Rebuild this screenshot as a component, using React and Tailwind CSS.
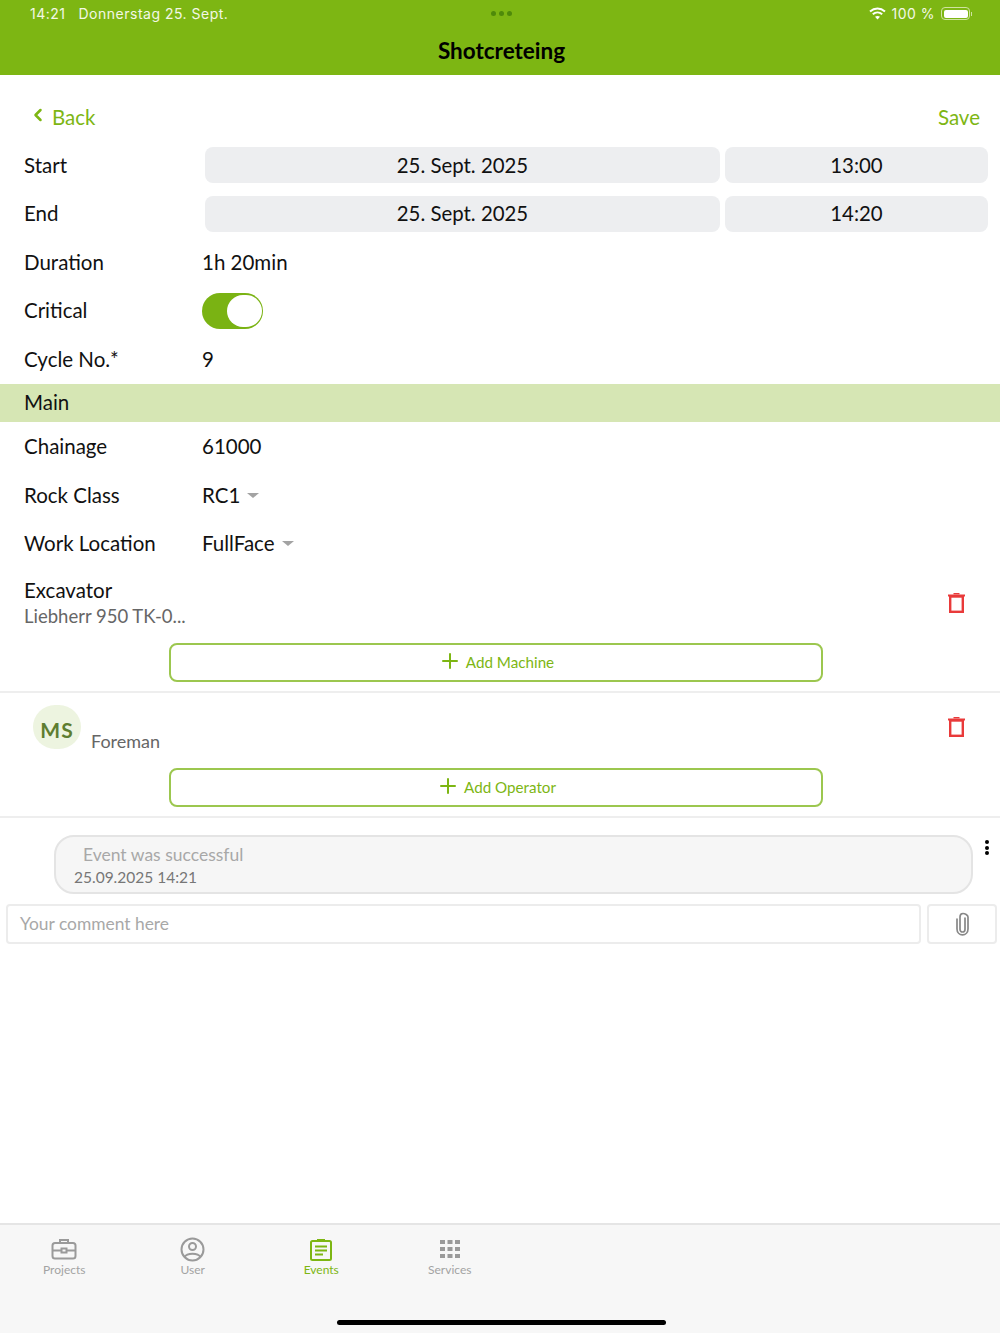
import { ChevronLeft, Plus } from 'lucide-react'

function Row({ label, children }) {
    return (
        <div className="flex items-center h-[48.5px] pl-6">
            <div className="w-[178px] text-[20.5px] text-[#111]">{label}</div>
            {children}
        </div>
    )
}

function DateRow({ label, date, time }) {
    return (
        <div className="flex items-center h-[48.5px] pl-6 pr-[12px]">
            <div className="w-[181px] text-[20.5px] text-[#111]">{label}</div>
            <div className="w-[515px] h-[36px] mr-[5px] rounded-lg bg-[#edeef0] flex items-center justify-center text-[20.4px] text-[#111]">{date}</div>
            <div className="flex-1 h-[36px] rounded-lg bg-[#edeef0] flex items-center justify-center text-[20.4px] text-[#111]">{time}</div>
        </div>
    )
}

function Caret() {
    return <span className="ml-[7px] w-0 h-0 border-x-[6px] border-x-transparent border-t-[5px] border-t-[#a3a3a3]"></span>
}

function Trash() {
    return (
        <svg width="17" height="20" viewBox="0 0 17 20" fill="none" stroke="#e93a3a">
            <path d="M0 2.5H17" strokeWidth="2" />
            <path d="M5.5 0.7H11.5" strokeWidth="1.4" />
            <rect x="2.2" y="3.5" width="12.6" height="15.3" strokeWidth="2.4" />
        </svg>
    )
}

function AddButton({ label, mt }) {
    return (
        <div className={`ml-[169px] w-[654px] h-[39px] rounded-lg border-2 border-[#9cc74f] flex items-center justify-center gap-[4px] text-[#7db613] text-[15.2px] ${mt}`}>
            <Plus size={24} strokeWidth={2} className="-mt-[3px]" />
            <span>{label}</span>
        </div>
    )
}

function NavItem({ icon, label, active }) {
    return (
        <div className={`w-[128.5px] flex flex-col items-center text-[12px] leading-[16px] ${active ? 'text-[#7db613]' : 'text-[#a3a3a3]'}`}>
            <div className="h-[24px] flex items-center justify-center mb-[1px]">{icon}</div>
            {label}
        </div>
    )
}

export default function App() {
    return (
        <div className="w-[1000px] h-[1333px] bg-white flex flex-col font-['Lato',sans-serif] overflow-hidden">
            <header className="relative h-[75px] bg-[#7db613] shrink-0">
                <div className="flex items-center h-[27px] pl-[30px] pr-[28px] text-[14px] text-[#f3f8e6] font-['Inter',sans-serif] tracking-[0.5px]">
                    <span>14:21</span>
                    <span className="ml-[13px]">Donnerstag 25. Sept.</span>
                    <div className="flex-1 flex justify-center gap-[3px] pr-[94px]">
                        <span className="w-[5px] h-[5px] rounded-full bg-[#4f8a0a]"></span>
                        <span className="w-[5px] h-[5px] rounded-full bg-[#4f8a0a]"></span>
                        <span className="w-[5px] h-[5px] rounded-full bg-[#4f8a0a]"></span>
                    </div>
                    <svg width="17" height="13" viewBox="0 0 17 13" fill="none" stroke="#fff" strokeWidth="2" className="mr-[5px]">
                        <path d="M1 4.5C5.5 0.5 11.5 0.5 16 4.5" />
                        <path d="M3.8 7.3C6.5 5 10.5 5 13.2 7.3" />
                        <path d="M8.5 12.5L6 9.8C7.5 8.7 9.5 8.7 11 9.8Z" fill="#fff" stroke="none" />
                    </svg>
                    <span>100 %</span>
                    <div className="ml-[6px] w-[29px] h-[13px] rounded-[4px] border border-[#cfe3a0] p-[1.5px]">
                        <div className="w-full h-full rounded-[2px] bg-white"></div>
                    </div>
                    <span className="ml-[1px] w-[1px] h-[4px] bg-[#cfe3a0]"></span>
                </div>
                <div className="text-center text-[22.5px] font-bold text-black leading-[48px] pl-[3px]">Shotcreteing</div>
            </header>

            <div className="flex justify-between items-center h-[30px] mt-[27px] pl-[28px] pr-[20px] text-[#7db613] text-[20.5px]">
                <div className="flex items-center">
                    <ChevronLeft size={20} strokeWidth={3} className="mr-[4px] -mt-[4px]" />
                    <span>Back</span>
                </div>
                <span>Save</span>
            </div>

            <div className="mt-[9px]">
                <DateRow label="Start" date="25. Sept. 2025" time="13:00" />
                <DateRow label="End" date="25. Sept. 2025" time="14:20" />
                <Row label="Duration"><span className="text-[20.5px] text-[#111]">1h 20min</span></Row>
                <Row label="Critical">
                    <div className="w-[61px] h-[36px] rounded-full bg-[#7ab313] relative">
                        <span className="absolute right-[1px] top-[2px] w-[35px] h-[32px] rounded-full bg-white"></span>
                    </div>
                </Row>
                <Row label="Cycle No.*"><span className="text-[20.5px] text-[#111]">9</span></Row>
            </div>

            <div className="h-[38px] bg-[#d6e6b4] flex items-center pl-6 text-[20.5px] text-[#111]">Main</div>

            <div className="mt-[1px]">
                <Row label="Chainage"><span className="text-[20.5px] text-[#111]">61000</span></Row>
                <Row label="Rock Class"><span className="text-[20.5px] text-[#111]">RC1</span><Caret /></Row>
                <Row label="Work Location"><span className="text-[20.5px] text-[#111]">FullFace</span><Caret /></Row>
            </div>

            <div className="flex items-center justify-between pl-6 pr-[35px] h-[56px] mt-[7px]">
                <div>
                    <div className="text-[20.5px] leading-[26px] text-[#111]">Excavator</div>
                    <div className="text-[18.5px] leading-[26px] text-[#666]">Liebherr 950 TK-0...</div>
                </div>
                <Trash />
            </div>
            <AddButton label="Add Machine" mt="mt-[12px]" />

            <div className="mt-[9px] border-t-2 border-[#eeeeee] h-[77px] flex items-start pl-[33px] pr-[35px]">
                <div className="mt-[12px] w-[48px] h-[44px] pt-[5px] rounded-full bg-[#edf4e0] flex items-center justify-center text-[21px] font-bold text-[#5e7d30] tracking-[1px]">MS</div>
                <div className="ml-[10px] mt-[36px] text-[18px] leading-[24px] text-[#666]">Foreman</div>
                <div className="ml-auto mt-[24px] flex"><Trash /></div>
            </div>
            <AddButton label="Add Operator" mt="" />

            <div className="mt-[9px] border-t-2 border-[#eeeeee] pt-[17px] flex items-start">
                <div className="ml-[54px] w-[919px] h-[59px] rounded-[20px] border-2 border-[#e4e4e4] bg-[#f6f6f6] pl-[18px] pt-[6px]">
                    <div className="pl-[9px] text-[17.5px] leading-[24px] text-[#a8a8a8]">Event was successful</div>
                    <div className="text-[15.5px] leading-[20px] text-[#777]">25.09.2025 14:21</div>
                </div>
                <div className="ml-[12px] mt-[5px] flex flex-col gap-[1.5px]">
                    <span className="w-[4px] h-[4px] rounded-full bg-black"></span>
                    <span className="w-[4px] h-[4px] rounded-full bg-black"></span>
                    <span className="w-[4px] h-[4px] rounded-full bg-black"></span>
                </div>
            </div>

            <div className="flex mt-[10px] pl-[6px] pr-[3px] gap-[6px]">
                <div className="w-[915px] h-[40px] rounded border-2 border-[#ececec] flex items-center pl-[12px] text-[17.4px] text-[#a8a8a8]">Your comment here</div>
                <div className="flex-1 h-[40px] rounded border-2 border-[#ececec] flex items-center justify-center">
                    <svg width="16" height="24" viewBox="0 0 16 24" fill="none" stroke="#888" strokeWidth="1.7" strokeLinecap="round">
                        <path d="M11 6V17.5C11 19 9.8 20 8.5 20C7.2 20 6 19 6 17.5V5C6 3 7.2 1.5 9 1.5C10.8 1.5 14 3 14 5V17C14 20.5 11.5 22.8 8.5 22.8C5.5 22.8 3 20.5 3 17V7" />
                    </svg>
                </div>
            </div>

            <div className="flex-1"></div>

            <nav className="h-[110px] shrink-0 bg-[#f7f7f7] border-t-2 border-[#e5e5e5] relative">
                <div className="flex pt-[12px]">
                    <NavItem label="Projects" icon={
                        <svg width="26" height="22" viewBox="0 0 26 22" fill="none" stroke="#9a9a9a" strokeWidth="2">
                            <rect x="1.5" y="5" width="23" height="15.5" rx="2.5" />
                            <path d="M9 5V2H17V5" />
                            <path d="M1.5 12.5H10.5M15.5 12.5H24.5" />
                            <rect x="10.5" y="10.5" width="5" height="4" />
                        </svg>
                    } />
                    <NavItem label="User" icon={
                        <svg width="25" height="25" viewBox="0 0 25 25" fill="none" stroke="#9a9a9a" strokeWidth="2">
                            <circle cx="12.5" cy="12.5" r="11" />
                            <circle cx="12.5" cy="9.5" r="3.5" />
                            <path d="M4.5 20C7 15.5 18 15.5 20.5 20" />
                        </svg>
                    } />
                    <NavItem label="Events" active icon={
                        <svg width="22" height="23" viewBox="0 0 22 23" fill="none" stroke="#7db613" strokeWidth="2">
                            <rect x="1" y="3" width="20" height="19" rx="1.5" />
                            <path d="M7 2.5H15" strokeWidth="3" />
                            <path d="M5 8.5H17M5 12.5H17M5 16.5H13" />
                        </svg>
                    } />
                    <NavItem label="Services" icon={
                        <svg width="20" height="18" viewBox="0 0 20 18" fill="#9a9a9a">
                            <rect x="0" y="0" width="5" height="4" /><rect x="7.5" y="0" width="5" height="4" /><rect x="15" y="0" width="5" height="4" />
                            <rect x="0" y="7" width="5" height="4" /><rect x="7.5" y="7" width="5" height="4" /><rect x="15" y="7" width="5" height="4" />
                            <rect x="0" y="14" width="5" height="4" /><rect x="7.5" y="14" width="5" height="4" /><rect x="15" y="14" width="5" height="4" />
                        </svg>
                    } />
                </div>
                <div className="absolute bottom-[8px] left-[337px] w-[329px] h-[5px] rounded-full bg-black"></div>
            </nav>
        </div>
    )
}
